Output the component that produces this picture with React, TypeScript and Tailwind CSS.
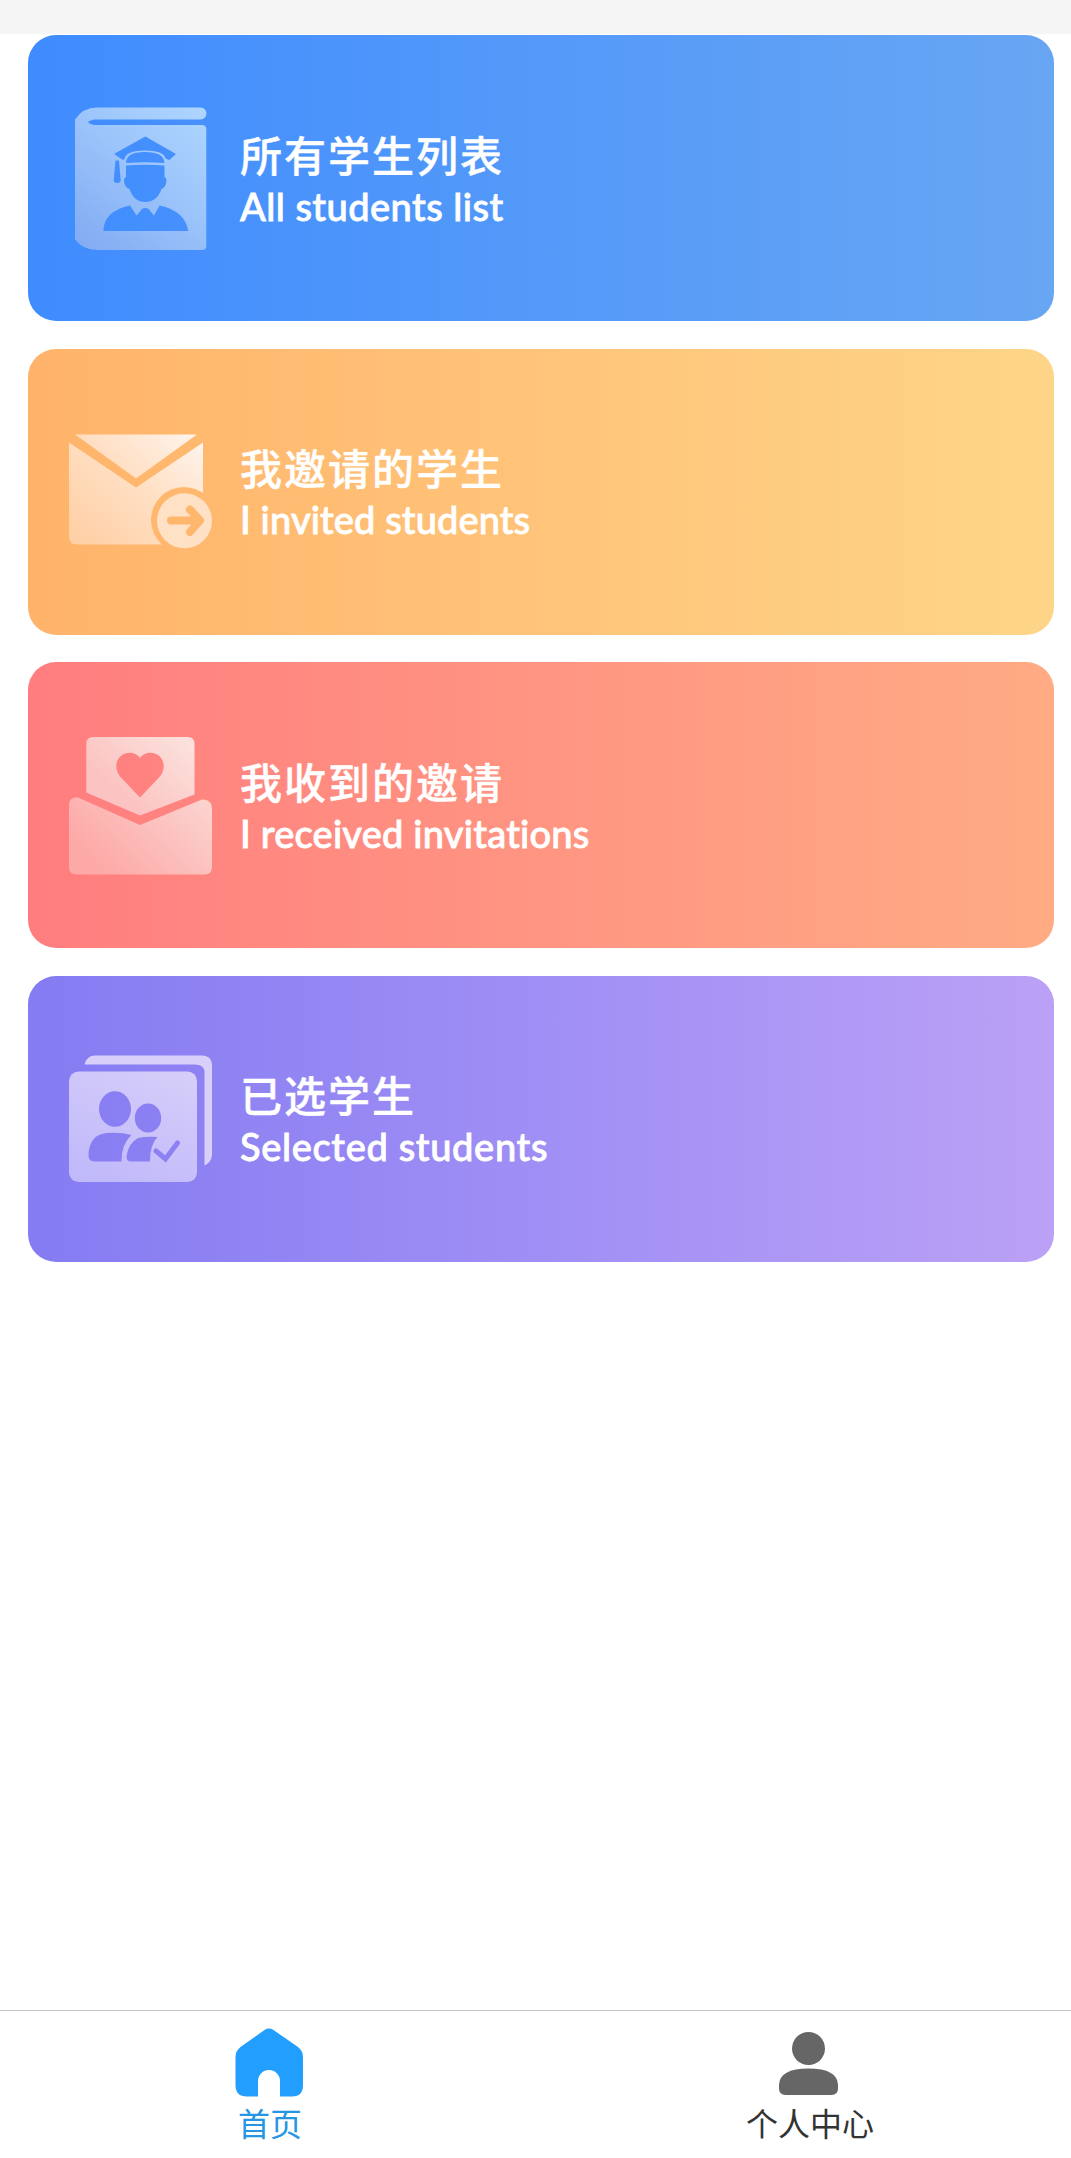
import type { ReactNode } from 'react';

function StudentBookIcon() {
  return (
    <svg viewBox="0 0 143 143" className="h-[143px] w-[143px] shrink-0" aria-hidden="true">
      <defs>
        <linearGradient id="book" x1="1" y1="0" x2="0.15" y2="1">
          <stop offset="0" stopColor="#b0d7ff" />
          <stop offset="0.5" stopColor="#9bc4fb" />
          <stop offset="1" stopColor="#83acf3" />
        </linearGradient>
        <mask id="bookMask">
          <path
            d="M28 .5H131.5A6 6 0 0 1 131.5 12.5H26Q21 13 19 15Q21 17.500 26 18H133Q137.300 18 137.300 22V139Q137.300 143 133 143H28Q14 143 6 132.500V12.500Q14 .5 28 .5Z"
            fill="#fff"
          />
          {/* cap and tassel */}
          <path d="M76.300 29.500 107 47 100.300 53 96.500 51.500Q95 43.500 76 43.500Q57 43.500 55.500 52L54 53 45 47Z" fill="#000" />
          <path d="M46.500 53.500h3.500l1.700 20q-.2 2.500-3.500 2.500t-3.500-2.500Z" fill="#000" />
          <path d="M57 56Q57 45 76 45Q95 45 95.500 56Q76 54.500 57 56Z" fill="#000" />
          {/* head */}
          <path
            d="M57 58.500Q76 57 95.500 58.500V70Q98.500 71 97 77Q95.500 81 92.500 82Q88 95 76 95Q65 95 60.500 82Q57 81 55.500 77Q54 71 57 70Z"
            fill="#000"
          />
          <path
            d="M34.300 124Q35 104 61 98.500L67.500 108.500 73 102Q76 100 79.500 102L85 108.500 90.500 98.500Q116 104 119.300 124Z"
            fill="#000"
          />
        </mask>
      </defs>
      <rect width="143" height="143" fill="url(#book)" mask="url(#bookMask)" />
    </svg>
  );
}

function SendMailIcon() {
  return (
    <svg viewBox="0 -1 143 143" className="h-[143px] w-[143px] shrink-0" aria-hidden="true">
      <defs>
        <linearGradient id="mail" x1="0.9" y1="0.1" x2="0.15" y2="0.9">
          <stop offset="0" stopColor="#fff4ec" />
          <stop offset="0.5" stopColor="#ffdfc3" />
          <stop offset="1" stopColor="#ffd0a6" />
        </linearGradient>
        <mask id="mailMask">
          <path d="M6 13.500H128L67 57.500Z" fill="#fff" />
          <path d="M0 21.500 67 66.500 134 21.500V123.500H8Q0 123.500 0 115.500Z" fill="#fff" />
          <circle cx="115" cy="99" r="33" fill="#000" />
        </mask>
      </defs>
      <rect width="143" height="143" fill="url(#mail)" mask="url(#mailMask)" />
      <circle cx="115.500" cy="99.800" r="27.500" fill="#ffe1c6" />
      <path
        d="M102 99.500H130M121 88.500 131 99.500 121 111"
        fill="none"
        stroke="#ffb66d"
        strokeWidth="8"
        strokeLinecap="round"
        strokeLinejoin="round"
      />
    </svg>
  );
}

function LoveLetterIcon() {
  return (
    <svg viewBox="0 -1 143 143" className="h-[143px] w-[143px] shrink-0" aria-hidden="true">
      <defs>
        <linearGradient id="letter" x1="0.85" y1="0" x2="0.15" y2="0.55">
          <stop offset="0" stopColor="#fce0db" />
          <stop offset="1" stopColor="#fbc3c1" />
        </linearGradient>
        <linearGradient id="pocket" x1="1" y1="0.2" x2="0.1" y2="0.7">
          <stop offset="0" stopColor="#fbd2ce" />
          <stop offset="1" stopColor="#fda9a7" />
        </linearGradient>
      </defs>
      <path
        fillRule="evenodd"
        d="M24 2H119Q125.500 2 125.500 9V59.500L71 80.500 17.300 57.500V9Q17.300 2 24 2ZM71 62.500 51.500 42C45 35 46.500 24 53 20C60 16 67.500 18 71 23C74.500 18 82 16 89 20C95.500 24 97 35 90.500 42Z"
        fill="url(#letter)"
      />
      <path
        d="M9 62.500 71 90 133 64.500Q143 64.500 143 73V132Q143 139.500 135.500 139.500H7.500Q0 139.500 0 132V70Q0 61.500 9 62.500Z"
        fill="url(#pocket)"
      />
    </svg>
  );
}

function SelectedIcon() {
  return (
    <svg viewBox="0 -1.5 143 143" className="h-[143px] w-[143px] shrink-0" aria-hidden="true">
      <defs>
        <linearGradient id="group" x1="0.8" y1="0" x2="0.4" y2="1">
          <stop offset="0" stopColor="#dad1f9" />
          <stop offset="1" stopColor="#c0b9fa" />
        </linearGradient>
        <mask id="groupMask">
          <rect y="23" width="128" height="110.500" rx="9.500" fill="#fff" />
          <ellipse cx="46" cy="60.500" rx="16" ry="17.800" fill="#000" />
          <ellipse cx="79" cy="69.500" rx="13.200" ry="14.500" fill="#000" />
          <path d="M19.500 107Q20 86 38 84.500Q52 83.500 62.500 86.500Q52 96 52.500 113H26Q19.500 113 19.500 107Z" fill="#000" />
          <path d="M57.500 108Q59 95 69 89.500Q78 87.500 88.500 88.500Q81 96 81 113H62Q57.500 113 57.500 108Z" fill="#000" />
          <path d="M87 102.500 96.500 110.500 108.500 94.500" fill="none" stroke="#000" strokeWidth="5" strokeLinecap="round" />
        </mask>
      </defs>
      <path
        d="M15.500 16Q18 7 26 7H133Q143 7 143 17V107Q142 114 135.500 117V22Q134 16 126 16Z"
        fill="#d8d0fb"
      />
      <rect width="143" height="143" fill="url(#group)" mask="url(#groupMask)" />
    </svg>
  );
}

type CardProps = {
  title: string;
  subtitle: string;
  gradient: string;
  tracking: string;
  icon: ReactNode;
};

const cards: CardProps[] = [
  {
    title: '所有学生列表',
    subtitle: 'All students list',
    gradient: 'from-[#3f8cff] to-[#68a6f3]',
    tracking: 'tracking-[0.45px]',
    icon: <StudentBookIcon />,
  },
  {
    title: '我邀请的学生',
    subtitle: 'I invited students',
    gradient: 'from-[#ffb36a] to-[#fed588]',
    tracking: 'tracking-[0.1px]',
    icon: <SendMailIcon />,
  },
  {
    title: '我收到的邀请',
    subtitle: 'I received invitations',
    gradient: 'from-[#ff7d7f] to-[#ffab84]',
    tracking: 'tracking-[0.2px]',
    icon: <LoveLetterIcon />,
  },
  {
    title: '已选学生',
    subtitle: 'Selected students',
    gradient: 'from-[#857bf2] to-[#bba1f6]',
    tracking: 'tracking-[0.65px]',
    icon: <SelectedIcon />,
  },
];

function MenuCard({ title, subtitle, gradient, tracking, icon }: CardProps) {
  return (
    <button
      className={`flex h-[286px] w-full shrink-0 items-center gap-7 rounded-[28px] bg-linear-to-r pl-[41px] text-left text-white ${gradient}`}
    >
      {icon}
      <div className="flex flex-col gap-0.5 pt-[3px] font-medium whitespace-nowrap">
        <span className="text-[42px] leading-[50px] tracking-[2px] [-webkit-text-stroke:0.4px_white]">{title}</span>
        <span className={`font-['Lato'] text-[38px] leading-[50px] [-webkit-text-stroke:0.8px_white] ${tracking}`}>
          {subtitle}
        </span>
      </div>
    </button>
  );
}

export default function App() {
  return (
    <div className="flex h-[2158px] w-full flex-col overflow-hidden bg-white font-['Noto_Sans_CJK_SC',sans-serif]">
      <div className="h-[34px] shrink-0 bg-[#f5f5f5]" />

      <main className="flex flex-1 flex-col gap-[27.6px] pt-px pr-[17px] pl-7">
        {cards.map((card) => (
          <MenuCard key={card.title} {...card} />
        ))}
      </main>

      {/* Tab bar */}
      <nav className="grid h-[148px] w-[1080px] shrink-0 grid-cols-2 border-t border-[#c8c8c8] text-[32px] leading-[44px]">
        <a className="flex flex-col items-center pt-4 text-[#2695e3]">
          <svg viewBox="0 0 70 70" className="mr-0.5 h-[70px] w-[70px]" aria-hidden="true">
            <path
              d="M30.500 3Q35 .2 39.500 3L64 20Q69 24 69 30V58Q69 69.500 58 69.500H46V54A11 11 0 0 0 24 54V69.500H13Q1.500 69.500 1.500 58V30Q1.500 24 6.500 20Z"
              fill="#229eff"
            />
          </svg>
          <span className="mt-[3px]">首页</span>
        </a>
        <a className="flex flex-col items-center pt-4 text-[#333]">
          <svg viewBox="0 0 70 70" className="mr-0.5 h-[70px] w-[70px]" aria-hidden="true">
            <circle cx="34.500" cy="21.500" r="16.500" fill="#666" />
            <path d="M5 58Q5.500 41.500 34.500 41.500T64 58V61.500Q64 68 57.500 68H11.500Q5 68 5 61.500Z" fill="#666" />
          </svg>
          <span className="mt-[3px]">个人中心</span>
        </a>
      </nav>
    </div>
  );
}
